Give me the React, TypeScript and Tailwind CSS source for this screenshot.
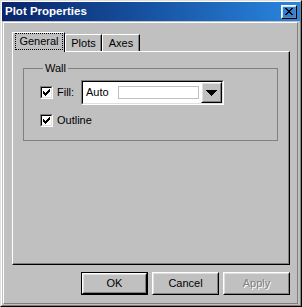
import React from "react";

// classic 3D edges
const raised =
  "border border-t-white border-l-white border-r-black border-b-black";
const raisedInner =
  "border border-t-[#dfdfdf] border-l-[#dfdfdf] border-r-[#808080] border-b-[#808080]";

function CheckMark() {
  return (
    <svg width="7" height="7" viewBox="0 0 7 7" shapeRendering="crispEdges">
      <path
        fill="#000"
        d="M0 2h1v3H0z M1 3h1v3H1z M2 4h1v3H2z M3 3h1v3H3z M4 2h1v3H4z M5 1h1v3H5z M6 0h1v3H6z"
      />
    </svg>
  );
}

function Checkbox() {
  return (
    <div className="w-[13px] h-[13px] shrink-0 border border-t-[#808080] border-l-[#808080] border-r-white border-b-white">
      <div className="w-full h-full bg-white border border-t-black border-l-black border-r-[#dfdfdf] border-b-[#dfdfdf] flex items-center justify-center">
        <CheckMark />
      </div>
    </div>
  );
}

function Button({ label, isDefault, disabled }: { label: string; isDefault?: boolean; disabled?: boolean }) {
  const face = (
    <div className={`w-full h-full ${raised}`}>
      <div className={`w-full h-full ${raisedInner} flex items-center justify-center`}>
        <span className={disabled ? "text-[#808080] [text-shadow:1px_1px_0_#fff]" : "text-black"}>{label}</span>
      </div>
    </div>
  );
  if (isDefault) {
    return <div className="w-[67px] h-[23px] border border-black">{face}</div>;
  }
  return <div className="w-[67px] h-[23px]">{face}</div>;
}

export default function App() {
  return (
    <div className="w-[302px] h-[307px] bg-[#c0c0c0] border border-t-[#dfdfdf] border-l-[#dfdfdf] border-r-black border-b-black font-['Liberation_Sans',Arial,sans-serif] text-[11px] leading-[13px] text-black select-none">
      <div className="h-full flex flex-col border border-t-white border-l-white border-r-[#808080] border-b-[#808080]">

        {/* Title bar */}
        <div className="h-[19px] shrink-0 flex items-center pl-[3px] pr-[3px] bg-gradient-to-r from-[#0a246a] to-[#2a86e0]">
          <span className="text-white font-bold text-[11.5px]">Plot Properties</span>
          <div className={`ml-auto w-[16px] h-[14px] ${raised}`}>
            <div className={`w-full h-full ${raisedInner} flex items-center justify-center`}>
              <svg width="8" height="7" viewBox="0 0 8 7" shapeRendering="crispEdges">
                <path
                  fill="#000"
                  d="M0 0h2v1H0z M6 0h2v1H6z M1 1h2v1H1z M5 1h2v1H5z M2 2h4v1H2z M3 3h2v1H3z M2 4h4v1H2z M1 5h2v1H1z M5 5h2v1H5z M0 6h2v1H0z M6 6h2v1H6z"
                />
              </svg>
            </div>
          </div>
        </div>

        {/* Dialog body */}
        <div className="flex-1 mt-px ml-px mr-[2px] mb-px flex flex-col border border-t-white border-l-white border-r-[#808080] border-b-[#808080] pt-[9px] pl-[8px] pr-[7px]">

          {/* Tabs */}
          <div className="h-[19px] flex items-end">
            <div className="relative z-10 h-[20px] w-[53px] -mb-px bg-[#c0c0c0] border-l border-t border-r border-l-white border-t-white border-r-black pl-[2px] pr-px pb-[2px]">
              <div className="h-full border border-dotted border-black flex items-center justify-center">General</div>
            </div>
            <div className="h-[17px] w-[37px] border-l border-t border-r border-l-white border-t-white border-r-black shadow-[inset_-1px_0_0_#808080] flex items-center justify-center">Plots</div>
            <div className="h-[17px] w-[38px] border-l border-t border-r border-l-white border-t-white border-r-black shadow-[inset_-1px_0_0_#808080] flex items-center justify-center">Axes</div>
          </div>

          {/* Tab panel */}
          <div className="h-[214px] shrink-0 border border-t-white border-l-white border-r-black border-b-black">
            <div className="h-full border-r border-b border-r-[#808080] border-b-[#808080] pl-[10px] pt-[10px]">
              <fieldset className="w-[255px] h-[79px] border border-[#808080] pl-[16px]">
                <legend className="ml-[3px] px-[2px] leading-[12px]">Wall</legend>

                <div className="mt-[6px] flex items-center">
                  <Checkbox />
                  <span className="ml-[4px] w-[24px]">Fill:</span>
                  {/* combo box */}
                  <div className="w-[143px] h-[25px] border border-t-[#808080] border-l-[#808080] border-r-white border-b-white">
                    <div className="w-full h-full bg-white border border-t-black border-l-black border-r-[#dfdfdf] border-b-[#dfdfdf] flex items-center">
                      <span className="w-[35px] pl-[3px]">Auto</span>
                      <div className="w-[81px] h-[13px] border border-[#c0c0c0] bg-white" />
                      <div className={`ml-auto w-[21px] h-full ${raised} bg-[#c0c0c0]`}>
                        <div className={`w-full h-full ${raisedInner} flex items-center justify-center`}>
                          <svg width="11" height="6" viewBox="0 0 11 6" shapeRendering="crispEdges">
                            <path fill="#000" d="M0 0h11v1H0z M1 1h9v1H1z M2 2h7v1H2z M3 3h5v1H3z M4 4h3v1H4z M5 5h1v1H5z" />
                          </svg>
                        </div>
                      </div>
                    </div>
                  </div>
                </div>

                <div className="mt-[9px] flex items-center">
                  <Checkbox />
                  <span className="ml-[4px]">Outline</span>
                </div>
              </fieldset>
            </div>
          </div>

          {/* Buttons */}
          <div className="mt-[7px] flex justify-end gap-[4px]">
            <Button label="OK" isDefault />
            <Button label="Cancel" />
            <Button label="Apply" disabled />
          </div>
        </div>
      </div>
    </div>
  );
}
